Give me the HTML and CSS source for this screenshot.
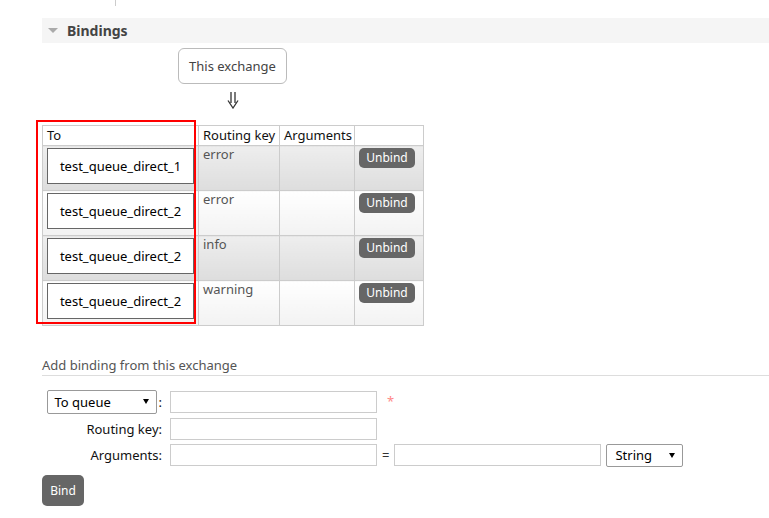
FILE: index.html
```html
<!DOCTYPE html>
<html lang="en">
<head>
<meta charset="utf-8">
<title>Bindings</title>
<link rel="stylesheet" href="styles.css">
</head>
<body>
<div class="page">
  <div class="stub"></div>
  <section class="section">
    <h2 class="section-head"><span class="tri"></span>Bindings</h2>

    <div class="flow">
      <div class="exchange-box">This exchange</div>
      <svg class="arrow" width="12" height="17" viewBox="0 0 12 17">
        <path d="M4 0V11M8 0V11M1 8.5L6 16L11 8.5" fill="none" stroke="#333" stroke-width="1.3"/>
      </svg>
    </div>

    <div class="bindings">
      <table class="list">
        <colgroup>
          <col class="c-to"><col class="c-key"><col class="c-args"><col class="c-act">
        </colgroup>
        <tr class="hdr">
          <th>To</th><th>Routing key</th><th>Arguments</th><th></th>
        </tr>
        <tr class="row alt1">
          <td><div class="queue">test_queue_direct_1</div></td>
          <td>error</td><td></td>
          <td><button class="btn-unbind">Unbind</button></td>
        </tr>
        <tr class="row alt2">
          <td><div class="queue">test_queue_direct_2</div></td>
          <td>error</td><td></td>
          <td><button class="btn-unbind">Unbind</button></td>
        </tr>
        <tr class="row alt1">
          <td><div class="queue">test_queue_direct_2</div></td>
          <td>info</td><td></td>
          <td><button class="btn-unbind">Unbind</button></td>
        </tr>
        <tr class="row alt2">
          <td><div class="queue">test_queue_direct_2</div></td>
          <td>warning</td><td></td>
          <td><button class="btn-unbind">Unbind</button></td>
        </tr>
      </table>
      <div class="highlight"></div>
    </div>

    <h3 class="subhead">Add binding from this exchange</h3>
    <form class="bind-form">
      <div class="frow">
        <div class="lbl">
          <div class="select sel-dest"><span>To queue</span><svg width="6" height="5" viewBox="0 0 6 5"><path d="M0 0H6L3 5Z" fill="#000"/></svg></div>
          <span>:</span>
        </div>
        <div class="field"></div>
        <span class="req">*</span>
      </div>
      <div class="frow">
        <div class="lbl">Routing key:</div>
        <div class="field"></div>
      </div>
      <div class="frow last">
        <div class="lbl">Arguments:</div>
        <div class="field"></div>
        <span class="eq">=</span>
        <div class="field field-val"></div>
        <div class="select sel-type"><span>String</span><svg width="6" height="5" viewBox="0 0 6 5"><path d="M0 0H6L3 5Z" fill="#000"/></svg></div>
      </div>
      <button type="button" class="btn-bind">Bind</button>
    </form>
  </section>
</div>
</body>
</html>
```

FILE: styles.css
```css
* { box-sizing: border-box; }
html, body { margin: 0; background: #fff; }
body {
  font-family: "Noto Sans", "DejaVu Sans", sans-serif;
  font-size: 13px;
  color: #333;
}
.page { padding-left: 42px; }
.stub { margin-left: 73px; width: 1px; height: 6px; background: #ccc; }

.section-head {
  margin: 12px 0 0;
  height: 25px;
  background: #f5f5f5;
  display: flex;
  align-items: center;
  padding-left: 6px;
  font-size: 14px;
  font-weight: bold;
  color: #444;
}
.tri {
  width: 0; height: 0;
  border-left: 5px solid transparent;
  border-right: 5px solid transparent;
  border-top: 5px solid #aaa;
  margin-right: 9px;
}

.flow {
  width: 109px;
  margin: 5px 0 0 136px;
  display: flex;
  flex-direction: column;
  align-items: center;
}
.exchange-box {
  width: 109px;
  height: 36px;
  border: 1px solid #bbb;
  border-radius: 6px;
  display: flex;
  align-items: center;
  justify-content: center;
  color: #444;
}
.arrow { display: block; margin: 8px 0 16px; }

.bindings { position: relative; width: max-content; }
.list {
  border-collapse: collapse;
  table-layout: fixed;
  width: 382px;
}
.c-to { width: 156px; }
.c-key { width: 81px; }
.c-args { width: 75px; }
.c-act { width: 69px; }
.list th, .list td {
  border: 1px solid #ccc;
  padding: 0 4px;
  vertical-align: top;
  text-align: left;
  line-height: 16px;
  white-space: nowrap;
}
.list th { font-weight: normal; color: #111; background: #fff; padding-top: 1px; }
.list td { color: #555; }
.hdr { height: 20px; }
.row { height: 45px; }
.alt1 td { background: linear-gradient(#eee, #ddd); }
.alt2 td { background: linear-gradient(#fff, #f2f2f2); }
.queue {
  margin-top: 2px;
  height: 36px;
  border: 1px solid #666;
  background: #fff;
  display: flex;
  align-items: center;
  justify-content: center;
  color: #000;
  line-height: normal;
}
.btn-unbind {
  display: block;
  margin-top: 2px;
  width: 56px;
  height: 20px;
  padding: 0;
  border: 0;
  border-radius: 5px;
  background: #666;
  color: #fff;
  font: 12px "Noto Sans", "DejaVu Sans", sans-serif;
  line-height: 20px;
}
.highlight {
  position: absolute;
  left: -6px;
  top: -5px;
  width: 160px;
  height: 204px;
  border: 2px solid #f00;
  pointer-events: none;
}

.subhead {
  margin: 30px 0 0;
  font-size: 13px;
  font-weight: normal;
  line-height: 18px;
  padding-bottom: 1px;
  border-bottom: 1px solid #ddd;
  color: #555;
}
.bind-form { margin-top: 12px; }
.frow { display: flex; align-items: center; height: 27px; }
.frow.last { height: 26px; }
.lbl {
  width: 120px;
  display: flex;
  justify-content: flex-end;
  align-items: center;
  gap: 2px;
  color: #111;
}
.field {
  margin-left: 8px;
  width: 207px;
  height: 22px;
  border: 1px solid #ccc;
  background: #fff;
}
.field-val { margin-left: 0; }
.req { margin-left: 10px; color: #f88; align-self: flex-start; margin-top: 4px; }
.eq { margin: 0 5px; color: #333; }
.select {
  display: flex;
  align-items: center;
  justify-content: space-between;
  border: 1px solid #999;
  border-radius: 2px;
  background: #fff;
  color: #000;
}
.sel-dest { width: 110px; height: 24px; padding: 0 7px; }
.sel-type { width: 77px; height: 23px; padding: 0 7px 0 8px; margin-left: 5px; }
.btn-bind {
  display: block;
  margin-top: 7px;
  width: 42px;
  height: 31px;
  padding: 0;
  border: 0;
  border-radius: 5px;
  background: #666;
  color: #fff;
  font: 12px "Noto Sans", "DejaVu Sans", sans-serif;
}
```
